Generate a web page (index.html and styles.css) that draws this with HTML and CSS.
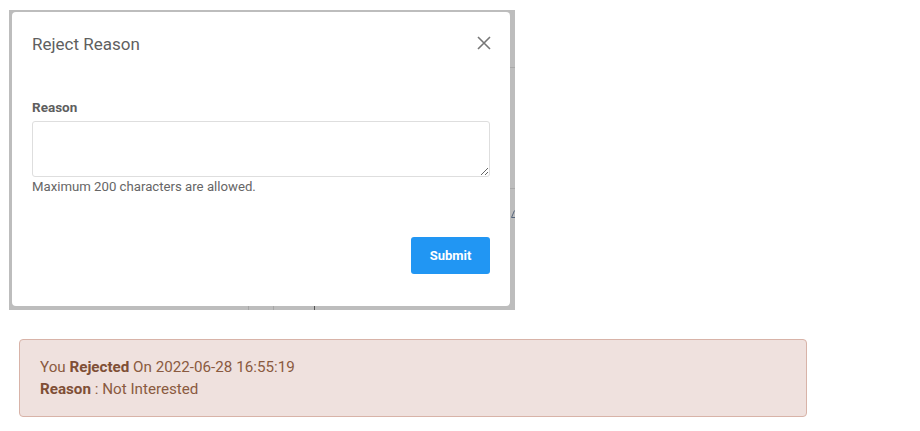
FILE: index.html
```html
<!DOCTYPE html>
<html>
<head>
<meta charset="utf-8">
<link rel="stylesheet" href="styles.css">
</head>
<body>
<div class="stage">
  <div class="backdrop">
    <div class="under under-h1"></div>
    <div class="under under-h2"></div>
    <svg class="under under-delta" width="4" height="8" viewBox="0 0 4 8"><path d="M3.5 0.5 L0.5 7.5 L4 7.5" stroke="#55647a" stroke-width="1" fill="none"/></svg>
    <div class="modal">
      <div class="modal-header">
        <h4 class="modal-title">Reject Reason</h4>
        <button class="close" aria-label="Close">
          <svg width="14" height="14" viewBox="0 0 14 14"><path d="M1 1 L13 13 M13 1 L1 13" stroke="#777" stroke-width="1.6" fill="none"/></svg>
        </button>
      </div>
      <div class="modal-body">
        <label class="label">Reason</label>
        <textarea class="textarea"></textarea>
        <div class="help">Maximum 200 characters are allowed.</div>
      </div>
      <div class="modal-footer">
        <button class="btn">Submit</button>
      </div>
    </div>
    <div class="under-bottom">
      <span class="seg s1"></span><span class="seg s2"></span><span class="seg s3"></span>
    </div>
  </div>
</div>
<div class="alert">
  <div class="line1">You <b>Rejected</b> On 2022-06-28 16:55:19</div>
  <div class="line2"><b>Reason</b> : Not Interested</div>
</div>
</body>
</html>
```
FILE: styles.css
```css
* { box-sizing: border-box; }
html, body { margin: 0; padding: 0; background: #fff; }
body { font-family: Roboto, "Noto Sans", sans-serif; }

.stage { padding: 10px 0 0 9px; }

.backdrop {
  position: relative;
  width: 506px;
  height: 300px;
  background: #bdbdbd;
  padding: 2px 5px 4px 3px;
}
.under { position: absolute; }
.under-h1 { right: 0; top: 57px; width: 5px; height: 1px; background: #a9a9a9; }
.under-h2 { right: 0; top: 178px; width: 5px; height: 1px; background: #a9a9a9; }
.under-delta { right: 0; top: 200px; }
.under-bottom { position: absolute; left: 0; right: 0; bottom: 0; height: 4px; }
.seg { position: absolute; bottom: 0; width: 1px; height: 4px; background: #a6a6a6; }
.s1 { left: 239px; }
.s2 { left: 264px; }
.s3 { left: 305px; background: #555; }

.modal {
  position: relative;
  z-index: 1;
  width: 498px;
  height: 294px;
  background: #fff;
  border-radius: 4px;
  display: flex;
  flex-direction: column;
}
.modal-header {
  display: flex;
  justify-content: space-between;
  align-items: flex-start;
  padding: 22px 19px 0 20px;
}
.modal-title {
  margin: 0;
  font-weight: 400;
  font-size: 17px;
  line-height: 20px;
  color: #5f5f5f;
}
.close {
  border: 0;
  background: none;
  padding: 0;
  margin-top: 2px;
  cursor: pointer;
  line-height: 0;
}
.modal-body {
  padding: 45px 20px 0 20px;
  display: flex;
  flex-direction: column;
}
.label {
  font-size: 13.5px;
  font-weight: 700;
  color: #5e5e5e;
  line-height: 16px;
}
.textarea {
  margin-top: 6px;
  width: 458px;
  height: 56px;
  border: 1px solid #dedede;
  border-radius: 3px;
  resize: vertical;
  font-family: inherit;
  display: block;
}
.help {
  margin-top: 2px;
  font-size: 13.2px;
  line-height: 15px;
  color: #666;
}
.modal-footer {
  display: flex;
  justify-content: flex-end;
  padding: 43px 20px 0 20px;
}
.btn {
  width: 79px;
  height: 37px;
  border: 0;
  border-radius: 3px;
  background: #2196f3;
  color: #fff;
  font-family: Roboto, sans-serif;
  font-weight: 700;
  font-size: 13px;
}

.alert {
  margin: 29px 0 0 19px;
  width: 788px;
  height: 78px;
  background: #efe1de;
  border: 1px solid #d8b3a8;
  border-radius: 4px;
  padding: 17px 20px;
  color: #8a5a40;
  font-size: 15.2px;
  line-height: 21px;
}
.line2 { margin-top: 1px; }
.alert b { font-weight: 700; color: #7f4f36; }
```
